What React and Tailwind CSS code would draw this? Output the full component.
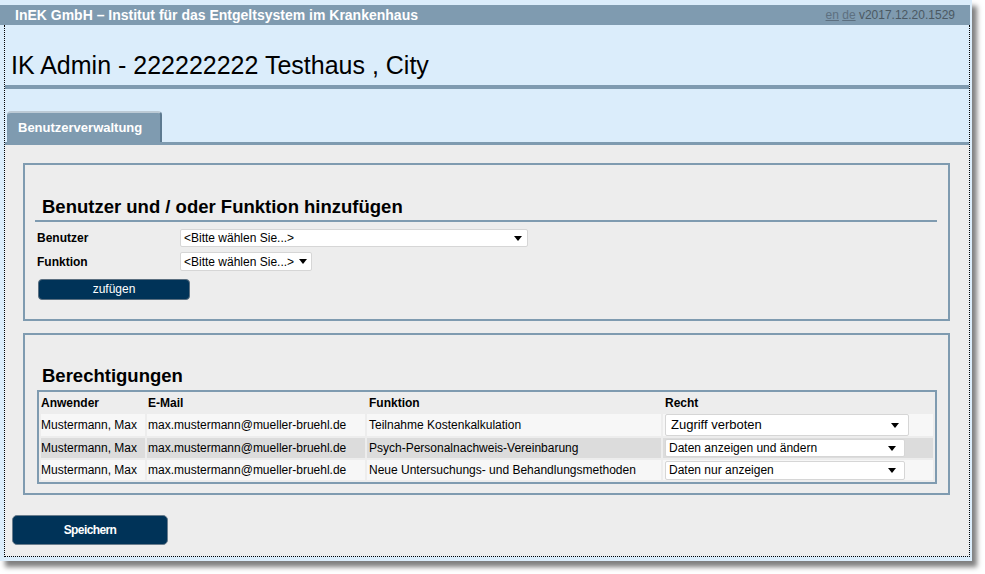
import React from "react";

const font = { fontFamily: '"Liberation Sans", Arial, sans-serif' };

function Arrow() {
  return (
    <svg width="8" height="5" viewBox="0 0 8 5" className="shrink-0">
      <path d="M0 0 L8 0 L4 5 Z" fill="#000" />
    </svg>
  );
}

function FakeSelect({ text, className }) {
  return (
    <div
      className={
        "flex items-center justify-between bg-white border border-[#d6d6d6] rounded-[2px] text-[12px] text-black " +
        className
      }
    >
      <span className="whitespace-nowrap">{text}</span>
      <Arrow />
    </div>
  );
}

const rows = [
  {
    name: "Mustermann, Max",
    mail: "max.mustermann@mueller-bruehl.de",
    fn: "Teilnahme Kostenkalkulation",
    recht: "Zugriff verboten",
    bg: "bg-[#f7f7f7]",
    h: "h-[22px]",
    sel: "w-[244px] h-[22px] pl-[5px] pr-[9px] text-[13px]",
  },
  {
    name: "Mustermann, Max",
    mail: "max.mustermann@mueller-bruehl.de",
    fn: "Psych-Personalnachweis-Vereinbarung",
    recht: "Daten anzeigen und ändern",
    bg: "bg-[#dcdcdc]",
    h: "h-[20px]",
    sel: "w-[240px] h-[18px] pl-[3px] pr-[8px]",
  },
  {
    name: "Mustermann, Max",
    mail: "max.mustermann@mueller-bruehl.de",
    fn: "Neue Untersuchungs- und Behandlungsmethoden",
    recht: "Daten nur anzeigen",
    bg: "bg-[#f7f7f7]",
    h: "h-[20px]",
    sel: "w-[240px] h-[19px] pl-[3px] pr-[8px]",
  },
];

export default function App() {
  return (
    <div className="w-[985px] h-[574px] bg-white overflow-hidden" style={font}>
      <div className="w-[972px] h-[561px] bg-[#dbedfb] shadow-[5px_6px_5px_rgba(0,0,0,0.5)] flex flex-col">
        <div className="h-[5px]" />
        {/* top bar */}
        <div className="h-[20px] w-[970px] bg-[#7f9bb0] flex items-center justify-between pl-[15px] pr-[15px]">
          <span className="text-white font-bold text-[14px] leading-none">
            InEK GmbH – Institut für das Entgeltsystem im Krankenhaus
          </span>
          <span className="text-[12px] leading-none text-[#4b5963]">
            <span className="underline text-[#5d7080]">en</span>{" "}
            <span className="underline text-[#5d7080]">de</span> v2017.12.20.1529
          </span>
        </div>
        {/* dotted container */}
        <div className="ml-[4px] w-[966px] h-[532px] border-l border-r border-b border-dotted border-black flex flex-col">
          <div className="h-[60px] flex items-end pl-[6px] pb-[6px]">
            <h1 className="text-[25px] leading-[28px] text-black">
              IK Admin - 222222222 Testhaus , City
            </h1>
          </div>
          <div className="h-[4px] bg-[#7f9bb0]" />
          <div className="h-[53px] flex items-end pl-[2px]">
            <div className="w-[155px] h-[31px] bg-[#7f9bb0] rounded-t-[4px] border-t-2 border-[#bccad5] border-r-2 border-r-[#5d7a90] flex items-center pl-[11px]">
              <span className="text-white font-bold text-[13px]">Benutzerverwaltung</span>
            </div>
          </div>
          <div className="h-[3px] bg-[#7f9bb0]" />
          {/* content */}
          <div className="flex-1 bg-[#ededed] flex flex-col">
            <div className="pt-[18px] pl-[18px] pr-[19px] flex flex-col gap-[12px]">
              {/* box 1 */}
              <div className="h-[158px] border-2 border-[#7f9bb0] flex flex-col">
                <div className="mt-[31px] ml-[10px] mr-[11px] border-b-2 border-[#7f9bb0] pl-[7px] pb-[2px]">
                  <h2 className="text-[18.5px] leading-[22px] font-bold text-black">
                    Benutzer und / oder Funktion hinzufügen
                  </h2>
                </div>
                <div className="ml-[10px] mt-[7px] flex items-center">
                  <div className="w-[145px] pl-[2px] text-[12px] font-bold text-black">Benutzer</div>
                  <FakeSelect text="<Bitte wählen Sie...>" className="w-[348px] h-[18px] pl-[3px] pr-[5px]" />
                </div>
                <div className="ml-[10px] mt-[5px] flex items-center">
                  <div className="w-[145px] pl-[2px] text-[12px] font-bold text-black">Funktion</div>
                  <FakeSelect text="<Bitte wählen Sie...>" className="w-[132px] h-[19px] pl-[3px] pr-[4px] gap-[4px]" />
                </div>
                <div className="ml-[13px] mt-[5px]">
                  <button className="w-[152px] h-[21px] bg-[#003358] rounded-[4px] border border-[#5b6f80] text-white text-[12px] leading-none">
                    zufügen
                  </button>
                </div>
              </div>
              {/* box 2 */}
              <div className="h-[162px] border-2 border-[#7f9bb0] flex flex-col">
                <div className="mt-[30px] pl-[17px]">
                  <h2 className="text-[18.5px] leading-[22px] font-bold text-black">Berechtigungen</h2>
                </div>
                <div className="ml-[12px] mt-[3px] w-[900px]">
                  <table className="w-[900px] table-fixed border-separate border-spacing-[2px] border-2 border-[#7f9bb0] text-[12px] text-black">
                    <colgroup>
                      <col className="w-[104px]" />
                      <col className="w-[218px]" />
                      <col className="w-[294px]" />
                      <col className="w-[270px]" />
                    </colgroup>
                    <thead>
                      <tr className="h-[18px]">
                        <th className="text-left font-bold p-0 pl-[0px]">Anwender</th>
                        <th className="text-left font-bold p-0 pl-[1px]">E-Mail</th>
                        <th className="text-left font-bold p-0 pl-[2px]">Funktion</th>
                        <th className="text-left font-bold p-0 pl-[2px]">Recht</th>
                      </tr>
                    </thead>
                    <tbody>
                      {rows.map((r, i) => (
                        <tr key={i} className={r.h}>
                          <td className={r.bg + " p-0 whitespace-nowrap"}>{r.name}</td>
                          <td className={r.bg + " p-0 pl-[1px] whitespace-nowrap"}>{r.mail}</td>
                          <td className={r.bg + " p-0 pl-[2px] whitespace-nowrap"}>{r.fn}</td>
                          <td className={r.bg + " p-0 pl-[2px]"}>
                            <FakeSelect text={r.recht} className={r.sel} />
                          </td>
                        </tr>
                      ))}
                    </tbody>
                  </table>
                </div>
              </div>
            </div>
            <div className="pl-[7px] mt-[20px]">
              <button
                className="w-[156px] h-[30px] bg-[#003358] rounded-[5px] border border-[#6a7d8d] text-white text-[12px] font-bold leading-none tracking-[-0.6px]"
                style={{ fontFamily: '"Liberation Sans Narrow", "Liberation Sans", Arial, sans-serif' }}
              >
                Speichern
              </button>
            </div>
          </div>
        </div>
      </div>
    </div>
  );
}
